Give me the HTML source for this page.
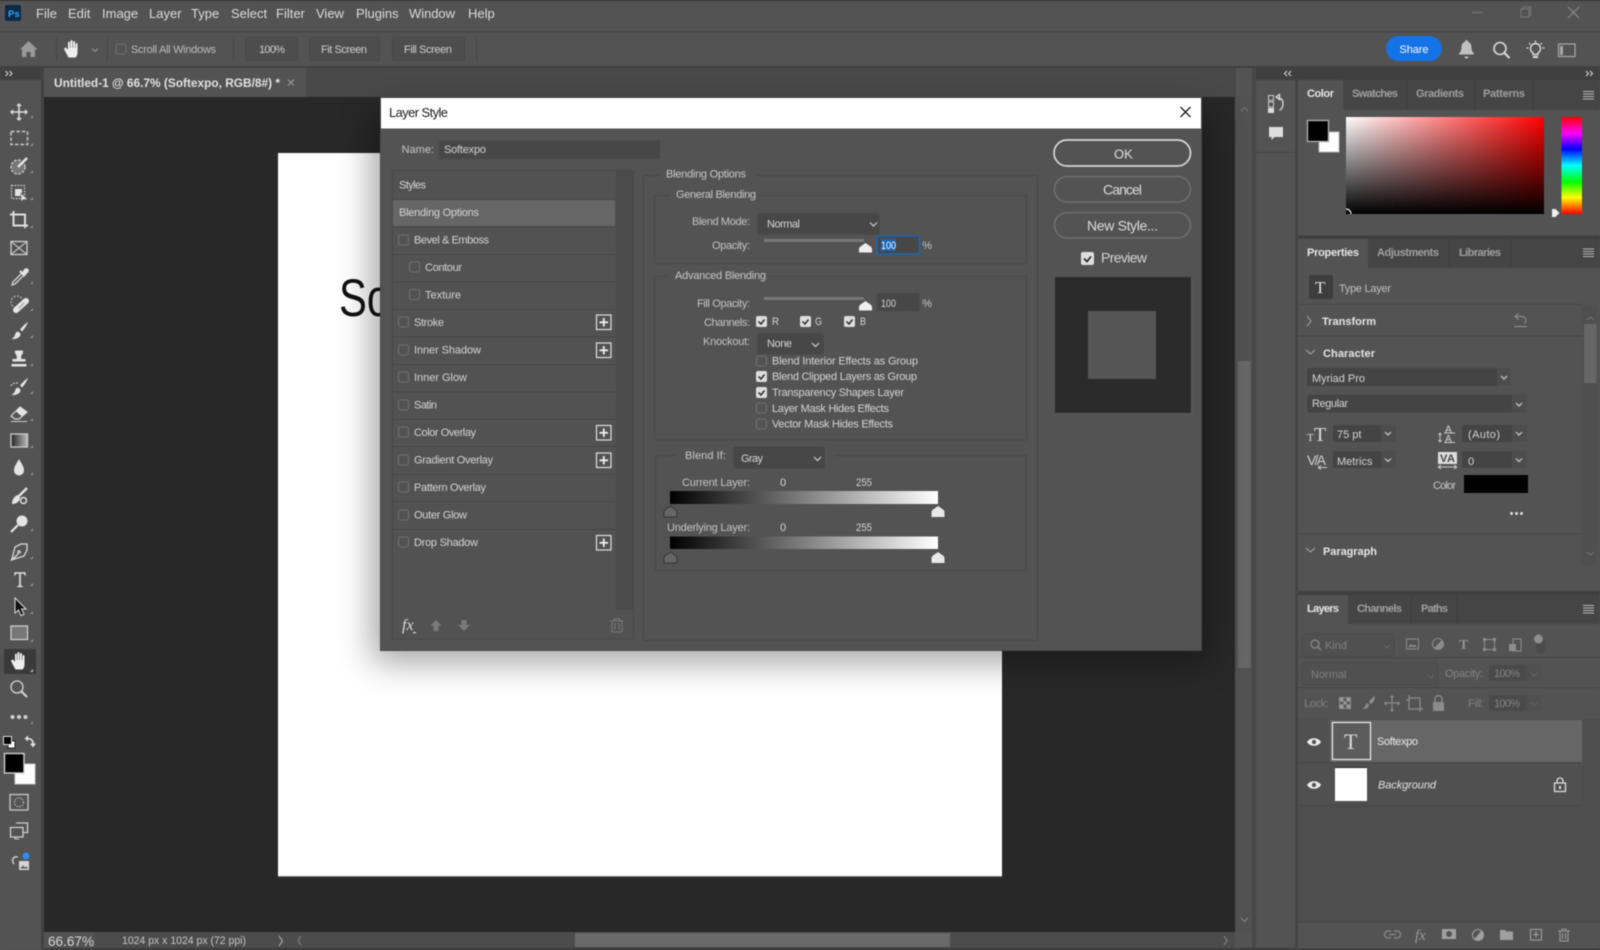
<!DOCTYPE html>
<html lang="en"><head><meta charset="utf-8"><title>Layer Style</title>
<style>
html,body{margin:0;padding:0;width:1600px;height:950px;overflow:hidden;background:#535353}
svg{display:block;position:absolute;left:0;top:0;filter:blur(.4px)}
text{font-family:"Liberation Sans",sans-serif;font-size:11px;fill:#d4d4d4;white-space:pre}
.m{font-size:13px;fill:#dcdcdc}
.o{font-size:11px;fill:#cfcfcf}
.b{font-weight:bold}
.i{fill:#a0a0a0;font-weight:bold}
.a{fill:#e6e6e6;font-weight:bold}
.l{fill:#c4c4c4;text-anchor:end}
.d{fill:#828282}
.s{fill:none;stroke:#d0d0d0;stroke-width:1.3}
.f{fill:#d0d0d0}
.c{fill:none;stroke:#d0d0d0;stroke-width:1.2}
.n{fill:none;stroke:#707070;stroke-width:1.1}
.k{fill:#dedede}
.p{fill:none;stroke:#e0e0e0;stroke-width:1.2}
</style></head><body>
<svg width="1600" height="950" viewBox="0 0 1600 950" xmlns="http://www.w3.org/2000/svg">
<defs>
<linearGradient id="hw" x1="0" x2="1" y1="0" y2="0"><stop offset="0" stop-color="#fff"/><stop offset="1" stop-color="#f00"/></linearGradient>
<linearGradient id="vb" x1="0" x2="0" y1="0" y2="1"><stop offset="0" stop-color="#000" stop-opacity="0"/><stop offset="1" stop-color="#000"/></linearGradient>
<linearGradient id="hue" x1="0" x2="0" y1="0" y2="1"><stop offset="0" stop-color="#f00"/><stop offset=".17" stop-color="#f0f"/><stop offset=".33" stop-color="#00f"/><stop offset=".5" stop-color="#0ff"/><stop offset=".67" stop-color="#0f0"/><stop offset=".83" stop-color="#ff0"/><stop offset="1" stop-color="#f00"/></linearGradient>
<linearGradient id="bw" x1="0" x2="1" y1="0" y2="0"><stop offset="0" stop-color="#000"/><stop offset="1" stop-color="#fff"/></linearGradient>
<linearGradient id="tg" x1="0" x2="1" y1="0" y2="0"><stop offset="0" stop-color="#222"/><stop offset="1" stop-color="#bbb"/></linearGradient>
<filter id="sh" x="-20%" y="-20%" width="140%" height="140%"><feGaussianBlur stdDeviation="17"/></filter>
</defs>

<!-- window chrome -->
<rect width="1600" height="950" fill="#535353"/>
<rect width="1600" height="1" fill="#2f2f2f"/>
<rect y="31" width="1600" height="1.5" fill="#434343"/>
<rect y="66" width="1600" height="2" fill="#414141"/>
<rect x="5" y="5" width="16" height="16" rx="2" fill="#0b2a47"/>
<text x="8" y="17" style="font-size:9.5px;font-weight:bold;fill:#31a8ff">Ps</text>
<text class="m" x="36" y="18">File</text><text class="m" x="68" y="18">Edit</text><text class="m" x="102" y="18">Image</text><text class="m" x="149" y="18">Layer</text><text class="m" x="191" y="18">Type</text><text class="m" x="231" y="18">Select</text><text class="m" x="276" y="18">Filter</text><text class="m" x="316" y="18">View</text><text class="m" x="356" y="18">Plugins</text><text class="m" x="409" y="18" textLength="46">Window</text><text class="m" x="468" y="18">Help</text>
<path d="M1472 12.500h10" stroke="#777" stroke-width="1.2"/>
<path d="M1521 9h8v8h-8zM1523 9V7h7.500v8H1529" fill="none" stroke="#777" stroke-width="1.1"/>
<path d="M1568 7l11 11M1579 7l-11 11" stroke="#8a8a8a" stroke-width="1.2"/>

<!-- options bar -->
<path d="M28.500 41l9 8.500h-2.500V57h-4.500v-5h-4v5h-4.500v-7.500H20z" fill="#9a9a9a"/>
<rect x="56" y="37" width="1" height="24" fill="#464646"/><rect x="107" y="37" width="1" height="24" fill="#464646"/><rect x="233" y="37" width="1" height="24" fill="#464646"/><rect x="476" y="37" width="1" height="24" fill="#464646"/>
<path transform="translate(72.500 49)" d="M-4 8.500L-8 1C-9-1-7-2-6-1L-4.500 1V-6C-4.500-8-2.500-8-2.500-6V-1H-2V-7.500C-2-9.500 0-9.500 0-7.500V-1H.5V-6.500C.5-8.500 2.500-8.500 2.500-6.500V-1H3V-4.500C3-6.500 5-6.500 5-4.500V3C5 6 4 7.500 3 8.500Z" fill="#eee"/>
<path d="M92 48.500l3 3 3-3" fill="none" stroke="#999" stroke-width="1"/>
<rect x="116" y="44" width="10" height="10" rx="2" class="n"/>
<text class="o" x="131" y="53" textLength="85" style="fill:#bdbdbd">Scroll All Windows</text>
<rect x="245.500" y="37.500" width="52" height="23" rx="2" fill="#4d4d4d" stroke="#474747"/><text class="o" x="259" y="53" textLength="26">100%</text>
<rect x="309.500" y="37.500" width="70" height="23" rx="2" fill="#4d4d4d" stroke="#474747"/><text class="o" x="321" y="53" textLength="46">Fit Screen</text>
<rect x="392.500" y="37.500" width="72" height="23" rx="2" fill="#4d4d4d" stroke="#474747"/><text class="o" x="404" y="53" textLength="48">Fill Screen</text>
<rect x="1386" y="36" width="56" height="25" rx="12.500" fill="#1473e6"/><text x="1399.500" y="53" style="fill:#fff" textLength="29">Share</text>
<path d="M1466.500 40c-1 0-1.500.8-1.500 1.700-2.500 1-3.500 3-3.500 5.500 0 3-1 4.800-2.500 6.300v1h15v-1c-1.500-1.500-2.500-3.300-2.500-6.300 0-2.500-1-4.500-3.500-5.500 0-.9-.5-1.700-1.500-1.700zM1464.500 56.500h4a2 2 0 0 1-4 0z" fill="#c0c0c0"/>
<circle cx="1500" cy="48.500" r="6" fill="none" stroke="#dcdcdc" stroke-width="1.6"/><path d="M1504.500 53l5 5" stroke="#dcdcdc" stroke-width="2"/>
<path d="M1533 54.500v-1.500c-1.500-1-2.500-2.500-2.500-4.500a5 5 0 0 1 10 0c0 2-1 3.500-2.500 4.500v1.500z" fill="none" stroke="#dcdcdc" stroke-width="1.400"/><path d="M1533 57h5" stroke="#dcdcdc" stroke-width="2"/><path d="M1526.500 48h2M1542.500 48h2M1529 43l1.500 1.500M1542 43l-1.500 1.500M1535.500 40.500v2" stroke="#dcdcdc" stroke-width="1.200" fill="none"/>
<rect x="1558.500" y="44" width="16.500" height="12.500" fill="none" stroke="#a8a8a8" stroke-width="1.2"/><rect x="1560" y="46" width="3" height="9" fill="#a8a8a8"/>

<!-- left toolbar and doc area -->
<rect y="68" width="41" height="12" fill="#3f3f3f"/><path d="M5.500 71l2.500 2.500-2.500 2.500M9.500 71l2.500 2.500-2.500 2.500" fill="none" stroke="#ddd" stroke-width="1"/>
<rect x="41" y="68" width="3" height="882" fill="#434343"/>
<rect x="44" y="68" width="1192" height="29" fill="#494949"/>
<rect x="44" y="68" width="262" height="29" fill="#535353"/>
<text x="54" y="87" style="font-size:12px;font-weight:bold;fill:#e2e2e2" textLength="226" lengthAdjust="spacingAndGlyphs">Untitled-1 @ 66.7% (Softexpo, RGB/8#) *</text>
<path d="M288 79.500l6 6M294 79.500l-6 6" stroke="#a0a0a0" stroke-width="1"/>
<rect x="44" y="97" width="1191" height="835" fill="#282828"/>

<!-- document -->
<rect x="278" y="153" width="724" height="723" fill="#fff"/>
<rect x="278" y="876" width="724" height="1" fill="#777"/>
<text x="339" y="316" style="font-size:53px;fill:#111" textLength="165" lengthAdjust="spacingAndGlyphs">Softexpo</text>

<!-- vertical scrollbar -->
<rect x="1235" y="97" width="17" height="835" fill="#515151"/>
<rect x="1238" y="361" width="12.500" height="307" fill="#666"/>
<path d="M1241 111l3.500-3.500 3.500 3.500" fill="none" stroke="#777" stroke-width="1"/>
<path d="M1241 918l3.500 3.500 3.500-3.500" fill="none" stroke="#888" stroke-width="1"/>
<rect x="1252" y="68" width="4" height="882" fill="#484848"/>

<!-- status bar -->
<rect x="44" y="932" width="1191" height="18" fill="#4c4c4c"/>
<rect x="44" y="932" width="51" height="18" fill="#535353"/>
<rect x="44" y="948" width="1556" height="2" fill="#3a3a3a"/>
<text x="48" y="946" style="font-size:14px;fill:#d6d6d6" textLength="46" lengthAdjust="spacingAndGlyphs">66.67%</text>
<text x="122" y="944" textLength="124" lengthAdjust="spacingAndGlyphs" style="fill:#c6c6c6">1024 px x 1024 px (72 ppi)</text>
<path d="M279 936l3.500 5-3.500 5" fill="none" stroke="#bbb" stroke-width="1"/>
<path d="M301 936l-3 4.500 3 4.500" fill="none" stroke="#888" stroke-width="1"/>
<rect x="575" y="933" width="375" height="14" fill="#696969"/>
<path d="M1224 936l3 4.500-3 4.500" fill="none" stroke="#888" stroke-width="1"/>

<!-- tools -->
<g class="tools">
<g transform="translate(19 112)"><path d="M0-7V7M-7 0H7" stroke="#ddd" stroke-width="1.6"/><path d="M0-9l3 3h-6zM0 9l3-3h-6zM-9 0l3-3v6zM9 0l-3-3v6z" fill="#ddd"/></g>
<rect x="11" y="131.500" width="16.500" height="13" fill="none" stroke="#ccc" stroke-width="1.500" stroke-dasharray="3.500 2"/>
<g transform="translate(19 166)"><circle cx="-1" cy="1" r="7" fill="#777" stroke="#ccc" stroke-width="1.400" stroke-dasharray="2.500 1.600"/><path d="M-1 1L8-8" stroke="#e4e4e4" stroke-width="2.600"/></g>
<g transform="translate(19 193)"><rect x="-7.500" y="-7.500" width="13" height="13" fill="none" stroke="#ccc" stroke-width="1.200" stroke-dasharray="1.800 1.200"/><rect x="-4" y="-4" width="7" height="7" fill="#e4e4e4"/><path d="M2 0V9l2.500-2.500H9z" fill="#e4e4e4" stroke="#535353" stroke-width=".6"/></g>
<path transform="translate(19 220)" d="M-9-5.500H6V8M-5.500-9V5.500H9" fill="none" stroke="#dedede" stroke-width="2"/>
<g transform="translate(19 248)"><rect x="-8" y="-6.500" width="16" height="13" fill="none" stroke="#d0d0d0" stroke-width="1.300"/><path d="M-8-6.500L8 6.500M8-6.500L-8 6.500" stroke="#d0d0d0" stroke-width="1.100"/></g>
<g transform="translate(19 277)"><path d="M3-4L-6 5-7 8-4 7 5-2" fill="none" stroke="#d8d8d8" stroke-width="1.300"/><path d="M1-6L6-1M4-4L6-7C7.500-9 10-6.500 8-5L5-2" stroke="#e4e4e4" stroke-width="2.200" fill="#e4e4e4"/></g>
<g transform="translate(19 304)"><circle cx="-2" cy="-2" r="6" fill="none" stroke="#bbb" stroke-width="1.100" stroke-dasharray="2 1.500"/><path d="M-3 6L7-3" stroke="#e6e6e6" stroke-width="6" stroke-linecap="round"/><path d="M0 4L5-1" stroke="#777" stroke-width="1.500" stroke-dasharray="1 1"/></g>
<path transform="translate(19 331)" d="M9-9C7-8 3-4 1-1.500L3 .5C5.500-2 8-6 9-9ZM-1 0.500C-4 1-3.500 4-5 6-6 7-7 7.500-7.500 8-3 8.500 2 6.500 1.500 2.500Z" fill="#e4e4e4"/>
<path transform="translate(19 359)" d="M-3-8.500H3C4.500-8.500 4.500-6 3-4.500 2-3 2-1.500 2.500 0H6.500V2.500H-6.500V0H-2.500C-2-1.500-2-3-3-4.500-4.500-6-4.500-8.500-3-8.500ZM-7.500 5H7.500V7.500H-7.500Z" fill="#e4e4e4"/>
<g transform="translate(19 387)"><path d="M9-9C7-8 3-4 1-1.500L3 .5C5.500-2 8-6 9-9ZM-1 0.500C-4 1-3.500 4-5 6-6 7-7 7.500-7.500 8-3 8.500 2 6.500 1.500 2.500Z" fill="#e4e4e4"/><path d="M-8-1C-7-4-4-4-1-4" fill="none" stroke="#ccc" stroke-width="1.200" stroke-dasharray="2 1.200"/></g>
<g transform="translate(19 414)"><path d="M-8 2L1-7 8-2 0 5H-4Z" fill="none" stroke="#d8d8d8" stroke-width="1.200"/><path d="M-3-2.500L1-7 8-2 3 2.500Z" fill="#e4e4e4"/><path d="M-8 7.500H8" stroke="#ccc" stroke-width="1"/></g>
<rect x="11" y="434" width="16.500" height="13" fill="url(#tg)" stroke="#ccc" stroke-width="1.300"/>
<path transform="translate(19 468)" d="M0-9C-2-5-5-2-5 2.500A5 5 0 0 0 5 2.500C5-2 2-5 0-9Z" fill="#e4e4e4"/>
<g transform="translate(19 496)"><path d="M8-8L-1 1" stroke="#e4e4e4" stroke-width="2.400"/><path d="M-1-1C-5 0-7 4-7 8-3 8 1 6 1 1Z" fill="#e4e4e4"/><circle cx="4.500" cy="4.500" r="3" fill="none" stroke="#e4e4e4" stroke-width="1.400"/></g>
<g transform="translate(19 524)"><circle cx="3" cy="-3" r="5.500" fill="#e4e4e4"/><path d="M-1 1L-8 8" stroke="#e4e4e4" stroke-width="2.200"/></g>
<g transform="translate(19 552)" fill="none" stroke="#dcdcdc" stroke-width="1.300"><path d="M8-8L2-8-4-5-7 7-7.500 8-6 7.500 5 4 8-2Z"/><path d="M-7 8L-1 2"/><circle cx="0" cy="0" r="1.200"/></g>
<path transform="translate(20 579.500) scale(.8 .9)" d="M-7-8H7V-4H6C6-6 5-6.500 3-6.500H1V6C1 7 2 7.300 3.500 7.300V8.500H-3.500V7.300C-2 7.300-1 7-1 6V-6.500H-3C-5-6.500-6-6-6-4H-7Z" fill="#e4e4e4"/>
<path transform="translate(19 607)" d="M-4-9V6L-.5 3 2 8.500 5 7.300 2.500 2H7Z" fill="#111" stroke="#ddd" stroke-width="1"/>
<rect x="11" y="626" width="16.500" height="13.500" fill="#777" stroke="#ccc" stroke-width="1.300"/>
<rect x="4" y="649" width="32" height="25" rx="1" fill="#3a3a3a"/>
<path transform="translate(19.500 661)" d="M-4 8.500L-8 1C-9-1-7-2-6-1L-4.500 1V-6C-4.500-8-2.500-8-2.500-6V-1H-2V-7.500C-2-9.500 0-9.500 0-7.500V-1H.5V-6.500C.5-8.500 2.500-8.500 2.500-6.500V-1H3V-4.500C3-6.500 5-6.500 5-4.500V3C5 6 4 7.500 3 8.500Z" fill="#eee"/>
<g transform="translate(19 689)"><circle cx="-2" cy="-2" r="6" fill="none" stroke="#d6d6d6" stroke-width="1.300"/><path d="M2.500 2.500L8 8" stroke="#d6d6d6" stroke-width="2"/></g>
<circle cx="12.500" cy="717" r="2" fill="#d0d0d0"/><circle cx="19" cy="717" r="2" fill="#d0d0d0"/><circle cx="25.500" cy="717" r="2" fill="#d0d0d0"/>
<g fill="#8f8f8f"><path d="M33 118h-3l3-3zM33 146h-3l3-3zM33 173h-3l3-3zM33 200h-3l3-3zM33 228h-3l3-3zM33 284h-3l3-3zM33 311h-3l3-3zM33 338h-3l3-3zM33 366h-3l3-3zM33 394h-3l3-3zM33 421h-3l3-3zM33 448h-3l3-3zM33 475h-3l3-3zM33 531h-3l3-3zM33 559h-3l3-3zM33 586h-3l3-3zM33 614h-3l3-3zM33 642h-3l3-3zM33 724h-3l3-3z"/></g>
<path d="M33 672h-3l3-3z" fill="#bbb"/>
<rect x="8" y="741" width="7" height="7" fill="#fff" stroke="#222"/><rect x="3.500" y="736.500" width="8" height="8" fill="#000" stroke="#ddd"/>
<path d="M27 738.500c4 0 6 1.500 6 5" fill="none" stroke="#e0e0e0" stroke-width="1.600"/><path d="M24.500 738.500l3.500-3v6zM33 747.500l3-4h-6z" fill="#e0e0e0"/>
<rect x="15" y="764" width="20" height="20" fill="#fff" stroke="#ccc"/>
<rect x="4.500" y="753.500" width="19.500" height="19.500" fill="#000" stroke="#cfcfcf" stroke-width="1.400"/>
<rect x="10" y="794.500" width="18" height="15.500" fill="none" stroke="#c8c8c8" stroke-width="1.300"/><circle cx="19" cy="802.300" r="4.500" fill="none" stroke="#c8c8c8" stroke-dasharray="1.500 1.200"/>
<path d="M16 823h11.500v9.500h-4M10.500 827.500h12.500v9.500h-12.500z" fill="none" stroke="#d0d0d0" stroke-width="1.300"/><path d="M15 837v2h4" stroke="#d0d0d0" fill="none"/>
<path d="M14 864C11 860 13 856 18 857" fill="none" stroke="#d6d6d6" stroke-width="1.400"/><rect x="19" y="861" width="10" height="9" fill="#d6d6d6"/><path d="M20 868.500l3-3 2 2 1.500-1 1.500 2z" fill="#555"/><circle cx="26" cy="856" r="3.500" fill="#2d8ceb"/>
</g>

<!-- right icons column -->
<rect x="1256" y="68" width="344" height="12" fill="#3f3f3f"/>
<path d="M1287 71l-2.500 2.500 2.500 2.500M1291 71l-2.500 2.500 2.500 2.500M1586 71l2.500 2.500-2.500 2.500M1590 71l2.500 2.500-2.500 2.500" fill="none" stroke="#ddd" stroke-width="1"/>
<rect x="1256" y="152" width="39" height="1" fill="#444"/>
<rect x="1295" y="80" width="3" height="870" fill="#444"/>
<rect x="1268.500" y="95.500" width="5" height="5" fill="none" stroke="#ccc"/><rect x="1268.500" y="102" width="5" height="5" fill="none" stroke="#ccc"/><rect x="1268" y="108" width="6" height="5" fill="#ddd"/>
<path d="M1278 98c4 0 5 3 5 6 0 3-1.500 5-3.500 6.500M1276 97l3.500-2.500v5z" fill="none" stroke="#ddd" stroke-width="1.300"/>
<path d="M1269 127h14v10h-8.500l-3 3v-3h-2.500z" fill="#ddd"/>

<!-- color panel -->
<rect x="1298" y="80" width="302" height="30" fill="#454545"/>
<rect x="1298" y="80" width="45" height="30" fill="#535353"/>
<rect x="1406" y="80" width="1" height="30" fill="#3c3c3c"/><rect x="1474" y="80" width="1" height="30" fill="#3c3c3c"/><rect x="1533" y="80" width="1" height="30" fill="#3c3c3c"/>
<text class="a" x="1307" y="97" textLength="27">Color</text><text class="i" x="1352" y="97" textLength="46">Swatches</text><text class="i" x="1416" y="97" textLength="48">Gradients</text><text class="i" x="1483" y="97" textLength="42">Patterns</text>
<path d="M1583 91.500h11M1583 94h11M1583 96.500h11M1583 99h11" stroke="#b8b8b8" stroke-width="1"/>
<rect x="1319" y="132" width="20" height="20" fill="#fff" stroke="#bbb"/>
<rect x="1307.500" y="120.500" width="21" height="21" fill="#000" stroke="#aaa" stroke-width="1.400"/>
<rect x="1346" y="117" width="198" height="97" fill="url(#hw)"/><rect x="1346" y="117" width="198" height="97" fill="url(#vb)"/>
<path d="M1346 209a5 5 0 0 1 5 5" fill="none" stroke="#eee" stroke-width="1.200"/>
<rect x="1561.500" y="117" width="20.500" height="97" fill="url(#hue)"/>
<path d="M1552 209h3.500l4 4-4 4H1552z" fill="#eee"/>
<rect x="1298" y="235.500" width="302" height="3.500" fill="#3f3f3f"/>

<!-- properties -->
<rect x="1298" y="239" width="302" height="29" fill="#454545"/>
<rect x="1298" y="239" width="70" height="29" fill="#535353"/>
<rect x="1449" y="239" width="1" height="29" fill="#3c3c3c"/><rect x="1510" y="239" width="1" height="29" fill="#3c3c3c"/>
<text class="a" x="1307" y="256" textLength="52">Properties</text><text class="i" x="1377" y="256" textLength="62">Adjustments</text><text class="i" x="1459" y="256" textLength="42">Libraries</text>
<path d="M1583 249h11M1583 251.500h11M1583 254h11M1583 256.500h11" stroke="#b8b8b8" stroke-width="1"/>
<rect x="1309" y="275" width="24" height="24" rx="2" fill="#3d3d3d"/>
<text x="1315" y="293" style="font-family:'Liberation Serif',serif;font-size:17px;fill:#e4e4e4">T</text>
<text x="1339" y="292" textLength="52" style="fill:#c0c0c0">Type Layer</text>
<rect x="1298" y="304" width="284" height="1" fill="#454545"/>
<path d="M1307 316l4 5-4 5" fill="none" stroke="#aaa" stroke-width="1"/>
<text class="a" x="1322" y="325" textLength="54">Transform</text>
<path d="M1518.500 313.500l-3.500 3 3.500 3M1515 316.500h6.500a4 4 0 0 1 3 7M1514 326.500h13" fill="none" stroke="#8a8a8a" stroke-width="1.200"/>
<rect x="1298" y="335.500" width="284" height="1" fill="#454545"/>
<path d="M1306 350l4.500 4 4.500-4" fill="none" stroke="#aaa" stroke-width="1"/>
<text class="a" x="1323" y="357" textLength="52">Character</text>
<rect x="1307" y="368" width="204" height="18" rx="2" fill="#444"/><rect x="1497" y="368" width="14" height="18" fill="#4d4d4d"/><path d="M1501 376l3 3 3-3" class="c"/>
<text x="1312" y="382" textLength="53">Myriad Pro</text>
<rect x="1307" y="394.500" width="220" height="18" rx="2" fill="#444"/><rect x="1512" y="394.500" width="15" height="18" fill="#4d4d4d"/><path d="M1516 403l3 3 3-3" class="c"/>
<text x="1312" y="407" textLength="36">Regular</text>
<text x="1307" y="441" style="font-family:'Liberation Serif',serif;font-size:11px;fill:#ddd">T</text><text x="1314" y="441" style="font-family:'Liberation Serif',serif;font-size:20px;fill:#ddd">T</text>
<rect x="1333" y="425" width="63" height="17" rx="2" fill="#444"/><rect x="1381" y="425" width="15" height="17" fill="#4d4d4d"/><path d="M1385 432l3 3 3-3" class="c"/>
<text x="1337" y="438">75 pt</text>
<text x="1307" y="465" style="font-size:14px;fill:#d0d0d0" textLength="19">V/A</text><path d="M1318 467.500h9M1318 467.500l3-2m-3 2l3 2" stroke="#ccc" fill="none"/>
<rect x="1333" y="451" width="63" height="17" rx="2" fill="#444"/><rect x="1381" y="451" width="15" height="17" fill="#4d4d4d"/><path d="M1385 458.500l3 3 3-3" class="c"/>
<text x="1337" y="465">Metrics</text>
<text x="1445" y="432.500" style="font-size:10px;fill:#d6d6d6">A</text><text x="1445" y="442" style="font-size:10px;fill:#d6d6d6">A</text><path d="M1440 433v9M1438.500 435l1.500-2 1.500 2M1438.500 440l1.500 2 1.500-2M1444 433h11M1444 442.500h11" stroke="#ccc" fill="none" stroke-width=".9"/>
<rect x="1462" y="425" width="65" height="17" rx="2" fill="#444"/><rect x="1512" y="425" width="15" height="17" fill="#4d4d4d"/><path d="M1516 432l3 3 3-3" class="c"/>
<text x="1468" y="438" textLength="32">(Auto)</text>
<rect x="1438" y="452" width="19" height="12" fill="#ddd"/><text x="1440" y="462" style="font-size:11px;font-weight:bold;fill:#444" textLength="15">VA</text><path d="M1438 467h19M1438 467l3-2m-3 2l3 2M1457 467l-3-2m3 2l-3 2" stroke="#ccc" fill="none"/>
<rect x="1462" y="451" width="65" height="17" rx="2" fill="#444"/><rect x="1512" y="451" width="15" height="17" fill="#4d4d4d"/><path d="M1516 458.500l3 3 3-3" class="c"/>
<text x="1468" y="465">0</text>
<text x="1433" y="489" textLength="23" style="fill:#c4c4c4">Color</text>
<rect x="1464" y="475" width="64" height="18" fill="#000"/>
<circle cx="1511.500" cy="513.500" r="1.500" fill="#ddd"/><circle cx="1516.500" cy="513.500" r="1.500" fill="#ddd"/><circle cx="1521.500" cy="513.500" r="1.500" fill="#ddd"/>
<rect x="1298" y="533.500" width="284" height="1" fill="#454545"/>
<path d="M1306 548l4.500 4 4.500-4" fill="none" stroke="#aaa" stroke-width="1"/>
<text class="a" x="1323" y="555" textLength="54">Paragraph</text>
<rect x="1582" y="305" width="15" height="260" fill="#4f4f4f"/><rect x="1584" y="324" width="12.500" height="59" fill="#666"/>
<path d="M1587 320l3.500-3 3.500 3M1587 552l3.500 3 3.500-3" fill="none" stroke="#777" stroke-width="1"/>
<rect x="1298" y="591" width="302" height="4" fill="#3f3f3f"/>

<!-- layers -->
<rect x="1298" y="595" width="302" height="29" fill="#454545"/>
<rect x="1298" y="595" width="50" height="29" fill="#535353"/>
<rect x="1411" y="595" width="1" height="29" fill="#3c3c3c"/><rect x="1457" y="595" width="1" height="29" fill="#3c3c3c"/>
<text class="a" x="1307" y="612" textLength="32">Layers</text><text class="i" x="1357" y="612" textLength="45">Channels</text><text class="i" x="1421" y="612" textLength="27">Paths</text>
<path d="M1583 605.500h11M1583 608h11M1583 610.500h11M1583 613h11" stroke="#b8b8b8" stroke-width="1"/>
<rect x="1302" y="634" width="92" height="22" rx="2" fill="#505050" stroke="#4a4a4a"/>
<circle cx="1315" cy="644" r="4" fill="none" stroke="#8c8c8c" stroke-width="1.200"/><path d="M1318 647l3 3" stroke="#8c8c8c" stroke-width="1.300"/>
<text class="d" x="1325" y="649">Kind</text><path d="M1384 645l3 3 3-3" fill="none" stroke="#666"/>
<rect x="1406.500" y="639" width="12" height="10" fill="none" stroke="#8c8c8c"/><path d="M1408 647l3-3 2 2 1.500-1.500 2.500 2.500z" fill="#8c8c8c"/>
<circle cx="1438" cy="644" r="5.500" fill="none" stroke="#8c8c8c"/><path d="M1442 640a5.500 5.500 0 0 1-8 8z" fill="#8c8c8c"/>
<text x="1459" y="649" style="font-family:'Liberation Serif',serif;font-size:14px;font-weight:bold;fill:#929292">T</text>
<rect x="1484.500" y="639.500" width="10" height="10" fill="none" stroke="#8c8c8c" stroke-width="1.100"/><rect x="1483" y="638" width="3" height="3" fill="#8c8c8c"/><rect x="1493" y="638" width="3" height="3" fill="#8c8c8c"/><rect x="1483" y="648" width="3" height="3" fill="#8c8c8c"/><rect x="1493" y="648" width="3" height="3" fill="#8c8c8c"/>
<path d="M1513 639h8v12h-8z" fill="none" stroke="#8c8c8c"/><rect x="1509" y="644" width="7" height="7" fill="#8c8c8c"/>
<rect x="1536" y="636" width="9" height="18" rx="4.500" fill="#4b4b4b"/><circle cx="1538.500" cy="639" r="4.500" fill="#8e8e8e"/>
<rect x="1298" y="657" width="302" height="1" fill="#464646"/>
<rect x="1302" y="663" width="136" height="22" rx="2" fill="#505050" stroke="#4a4a4a"/>
<text class="d" x="1311" y="678">Normal</text><path d="M1428 675l3 3 3-3" fill="none" stroke="#666"/>
<text class="d" x="1445" y="677" textLength="38">Opacity:</text>
<rect x="1489" y="665" width="53" height="16" rx="1" fill="#4a4a4a"/><rect x="1526" y="665" width="16" height="16" fill="#505050"/>
<text class="d" x="1494" y="677" textLength="26">100%</text><path d="M1531 673l3 3 3-3" fill="none" stroke="#666"/>
<rect x="1298" y="687" width="302" height="1" fill="#464646"/>
<text class="d" x="1304" y="707" textLength="25">Lock:</text>
<rect x="1339.500" y="697.500" width="11" height="11" fill="#5c5c5c" stroke="#8c8c8c"/><path d="M1340 698h3.500v3.500h-3.500zM1346.500 698h3.500v3.500h-3.500zM1343.500 701.500h3v3h-3zM1340 704.500h3.500v3.500h-3.500zM1346.500 704.500h3.500v3.500h-3.500z" fill="#9a9a9a"/>
<path d="M1375 696c-2 1-5 4-6 6l2 2c2-1 4-5 4-8zM1367.500 703c-2 .5-1.500 3-3 4l-2 1.500c3 1 6 0 6.500-3.500z" fill="#8c8c8c"/>
<path d="M1392 696v15M1384.500 703h15" stroke="#8c8c8c" stroke-width="1.200"/><path d="M1392 695l2.500 2.500h-5zM1392 712l2.500-2.500h-5zM1384 703.500l2.500-2.500v5zM1400 703.500l-2.500-2.500v5z" fill="#8c8c8c"/>
<path d="M1409 698h11v11h-11zM1406 700h3M1420 712v-3M1409 695v3M1420 709h3" fill="none" stroke="#8c8c8c" stroke-width="1.200"/>
<rect x="1433" y="702" width="11" height="9" fill="#8c8c8c"/><path d="M1435 702v-3a3.500 3.500 0 0 1 7 0v3" fill="none" stroke="#8c8c8c" stroke-width="1.300"/>
<text class="d" x="1468" y="707" textLength="16">Fill:</text>
<rect x="1489" y="695" width="53" height="16" rx="1" fill="#4a4a4a"/><rect x="1526" y="695" width="16" height="16" fill="#505050"/>
<text class="d" x="1494" y="707" textLength="26">100%</text><path d="M1531 703l3 3 3-3" fill="none" stroke="#666"/>
<rect x="1298" y="719" width="284" height="203" fill="#4e4e4e"/>
<rect x="1582" y="719" width="18" height="203" fill="#4e4e4e"/>
<rect x="1298" y="720" width="32" height="42" fill="#505050"/>
<rect x="1330" y="720" width="252" height="42" fill="#666"/>
<rect x="1298" y="763" width="284" height="42" fill="#505050"/>
<rect x="1298" y="762" width="284" height="1.200" fill="#484848"/><rect x="1298" y="805" width="284" height="1" fill="#484848"/>
<rect x="1332.500" y="722.500" width="38" height="37" fill="#5c5c5c" stroke="#eee" stroke-width="1.200"/>
<text x="1344" y="749" style="font-family:'Liberation Serif',serif;font-size:22px;fill:#dcdcdc">T</text>
<rect x="1335" y="768" width="32" height="33" fill="#fff"/><rect x="1335" y="767" width="32" height="1" fill="#222"/>
<path d="M1307 742c3-5 11-5 14 0-3 5-11 5-14 0z" fill="#eee"/><circle cx="1314" cy="742" r="2.200" fill="#555"/>
<path d="M1307 785c3-5 11-5 14 0-3 5-11 5-14 0z" fill="#eee"/><circle cx="1314" cy="785" r="2.200" fill="#555"/>
<text x="1377" y="745" textLength="41" style="fill:#ececec">Softexpo</text>
<text x="1378" y="788.500" textLength="58" style="font-style:italic;fill:#e4e4e4">Background</text>
<rect x="1554.500" y="783" width="11" height="8.500" fill="none" stroke="#ddd" stroke-width="1.300"/><path d="M1557 783v-2a3 3 0 0 1 6 0v2" fill="none" stroke="#ddd" stroke-width="1.300"/><rect x="1559" y="786" width="2" height="3" fill="#ddd"/>
<rect x="1298" y="921.500" width="302" height="1" fill="#454545"/><rect x="1298" y="922.500" width="302" height="26" fill="#535353"/>
<path d="M1391 931h-3a3.500 3.500 0 0 0 0 7h3M1394 931h3a3.500 3.500 0 0 1 0 7h-3M1389 934.500h7" fill="none" stroke="#8a8a8a" stroke-width="1.300"/>
<text x="1415" y="940" style="font-family:'Liberation Serif',serif;font-style:italic;font-size:15px;fill:#9a9a9a">fx</text>
<rect x="1442" y="929" width="14" height="10" fill="#a0a0a0"/><circle cx="1449" cy="934" r="3" fill="#535353"/>
<circle cx="1478" cy="935" r="5.500" fill="none" stroke="#a0a0a0"/><path d="M1481.500 930.500a5.500 5.500 0 0 1-7 8.500z" fill="#a0a0a0"/>
<path d="M1500 930h5l1.500 1.500h6.500v8.500h-13z" fill="#a0a0a0"/>
<rect x="1530.500" y="929.500" width="11" height="10.500" fill="none" stroke="#a0a0a0" stroke-width="1.100"/><path d="M1533 934.500h6M1536 931.500v6" stroke="#a0a0a0" stroke-width="1.100"/>
<path d="M1560 931h8v10h-8zM1558 931h12M1562 931v-2h4v2M1562.500 933v6M1565.500 933v6" fill="none" stroke="#9a9a9a" stroke-width="1.100"/>

<!-- dialog shadow -->
<rect x="372" y="112" width="838" height="550" fill="#000" opacity=".36" filter="url(#sh)"/>

<!-- dialog -->
<rect x="380" y="97" width="822" height="554" fill="#535353"/>
<rect x="380.500" y="97.500" width="821" height="553" fill="none" stroke="#4a4a4a"/>
<rect x="381" y="98" width="820" height="30.500" fill="#fff"/>
<text x="389" y="117" style="font-size:13px;fill:#1c1c1c" textLength="59">Layer Style</text>
<path d="M1180.500 107l10 10M1190.500 107l-10 10" stroke="#1a1a1a" stroke-width="1.300"/>

<text class="l" x="434" y="153" style="fill:#c8c8c8">Name:</text>
<rect x="439" y="140.500" width="221" height="18.500" rx="1" fill="#474747" stroke="#4d4d4d"/>
<text x="444" y="153" textLength="42" style="fill:#d4d4d4">Softexpo</text>

<!-- style list -->
<rect x="392.500" y="170.500" width="241" height="468.500" fill="#525252" stroke="#474747"/>
<rect x="616" y="171" width="17" height="439" fill="#4b4b4b"/>
<rect x="393" y="173" width="223" height="25.500" fill="#525252"/>
<rect x="393" y="200" width="222" height="26" fill="#666"/>
<g fill="#464646"><rect x="393" y="199" width="223" height="1"/><rect x="393" y="226.500" width="223" height="1"/><rect x="393" y="254" width="223" height="1"/><rect x="393" y="281.500" width="223" height="1"/><rect x="393" y="309" width="223" height="1"/><rect x="393" y="336.500" width="223" height="1"/><rect x="393" y="364" width="223" height="1"/><rect x="393" y="391.500" width="223" height="1"/><rect x="393" y="419" width="223" height="1"/><rect x="393" y="446" width="223" height="1"/><rect x="393" y="474" width="223" height="1"/><rect x="393" y="501" width="223" height="1"/><rect x="393" y="529" width="223" height="1"/></g>
<text x="399" y="188.500" textLength="27">Styles</text>
<text x="399" y="216" textLength="80">Blending Options</text>
<g>
<rect x="398.500" y="235" width="10" height="10" rx="2" class="n"/><text x="414" y="243.500" textLength="75">Bevel &amp; Emboss</text>
<rect x="409.500" y="262" width="10" height="10" rx="2" class="n"/><text x="425" y="271" textLength="37">Contour</text>
<rect x="409.500" y="289.500" width="10" height="10" rx="2" class="n"/><text x="425" y="298.500" textLength="36">Texture</text>
<rect x="398.500" y="317" width="10" height="10" rx="2" class="n"/><text x="414" y="326" textLength="30">Stroke</text>
<rect x="398.500" y="345" width="10" height="10" rx="2" class="n"/><text x="414" y="353.500" textLength="67">Inner Shadow</text>
<rect x="398.500" y="372" width="10" height="10" rx="2" class="n"/><text x="414" y="381" textLength="53">Inner Glow</text>
<rect x="398.500" y="400" width="10" height="10" rx="2" class="n"/><text x="414" y="408.500" textLength="23">Satin</text>
<rect x="398.500" y="427" width="10" height="10" rx="2" class="n"/><text x="414" y="436" textLength="62">Color Overlay</text>
<rect x="398.500" y="455" width="10" height="10" rx="2" class="n"/><text x="414" y="463.500" textLength="79">Gradient Overlay</text>
<rect x="398.500" y="482" width="10" height="10" rx="2" class="n"/><text x="414" y="491" textLength="72">Pattern Overlay</text>
<rect x="398.500" y="510" width="10" height="10" rx="2" class="n"/><text x="414" y="518.500" textLength="53">Outer Glow</text>
<rect x="398.500" y="537" width="10" height="10" rx="2" class="n"/><text x="414" y="546" textLength="64">Drop Shadow</text>
</g>
<g class="pb"><rect x="596.500" y="315" width="14.500" height="14.500" class="p"/><path d="M599.500 322.300h8.500M603.800 318v8.500" stroke="#eee" stroke-width="1.800"/>
<rect x="596.500" y="343" width="14.500" height="14.500" class="p"/><path d="M599.500 350.300h8.500M603.800 346v8.500" stroke="#eee" stroke-width="1.800"/>
<rect x="596.500" y="425.500" width="14.500" height="14.500" class="p"/><path d="M599.500 432.800h8.500M603.800 428.500v8.500" stroke="#eee" stroke-width="1.800"/>
<rect x="596.500" y="453" width="14.500" height="14.500" class="p"/><path d="M599.500 460.300h8.500M603.800 456v8.500" stroke="#eee" stroke-width="1.800"/>
<rect x="596.500" y="535.500" width="14.500" height="14.500" class="p"/><path d="M599.500 542.800h8.500M603.800 538.500v8.500" stroke="#eee" stroke-width="1.800"/></g>
<text x="402" y="630" style="font-family:'Liberation Serif',serif;font-style:italic;font-size:16px;fill:#ddd">fx</text><rect x="413" y="632" width="3" height="1.200" fill="#ddd"/>
<path d="M436 620l6 6h-3.500v5h-5v-5H430z" fill="#7a7a7a"/><path d="M464 631l6-6h-3.500v-5h-5v5H458z" fill="#7a7a7a"/>
<path d="M612 621h10v11h-10zM610.500 621h13M614 621v-2h6v2M615 623v7M619 623v7" fill="none" stroke="#777" stroke-width="1.100"/>

<!-- blending options -->
<rect x="643.500" y="175.500" width="394" height="465" fill="none" stroke="#484848"/>
<rect x="660" y="168" width="96" height="14" fill="#535353"/>
<text x="666" y="177.500" textLength="80" style="fill:#c8c8c8">Blending Options</text>
<rect x="654.500" y="195.500" width="372" height="68" fill="none" stroke="#484848"/>
<rect x="670" y="188" width="88" height="14" fill="#535353"/>
<text x="676" y="198" textLength="80" style="fill:#c8c8c8">General Blending</text>
<text class="l" x="750" y="225" textLength="58">Blend Mode:</text>
<rect x="757.500" y="213.500" width="122" height="21" rx="2" fill="#474747" stroke="#4d4d4d"/><text x="767" y="227.500" textLength="33">Normal</text><path d="M870 222.500l3.500 3.500 3.500-3.500" class="c"/>
<text class="l" x="750" y="249" textLength="38">Opacity:</text>
<rect x="764" y="239" width="100" height="3" fill="#777"/>
<path d="M865.500 243l5 3.500q1.500 1 1.500 3v3h-13v-3q0-2 1.500-3z" fill="#eee"/>
<rect x="877" y="236" width="42.500" height="18" fill="#474747" stroke="#1a65b5" stroke-width="1.500"/>
<rect x="881" y="239" width="15" height="12" fill="#1a65b5"/><text x="881" y="249" textLength="15" lengthAdjust="spacingAndGlyphs" style="fill:#fff">100</text>
<text class="l" x="932" y="249" style="font-size:11px">%</text>
<rect x="654.500" y="276.500" width="372" height="163.500" fill="none" stroke="#484848"/>
<rect x="668" y="269" width="100" height="14" fill="#535353"/>
<text x="675" y="279" textLength="91" style="fill:#c8c8c8">Advanced Blending</text>
<text class="l" x="750" y="307" textLength="53">Fill Opacity:</text>
<rect x="764" y="297" width="100" height="3" fill="#777"/>
<path d="M865.500 301l5 3.500q1.500 1 1.500 3v3h-13v-3q0-2 1.500-3z" fill="#eee"/>
<rect x="877" y="293" width="42.500" height="18" fill="#474747" stroke="#4d4d4d"/><text x="881" y="307" textLength="15" lengthAdjust="spacingAndGlyphs">100</text>
<text class="l" x="932" y="307" style="font-size:11px">%</text>
<text class="l" x="750" y="326" textLength="46">Channels:</text>
<rect x="756" y="316" width="11" height="11" rx="2" class="k"/><path d="M758.500 321.500l2.500 2.500 3.500-4.500" fill="none" stroke="#2b2b2b" stroke-width="1.500"/><text x="772" y="325" textLength="7" lengthAdjust="spacingAndGlyphs">R</text>
<rect x="800" y="316" width="11" height="11" rx="2" class="k"/><path d="M802.500 321.500l2.500 2.500 3.500-4.500" fill="none" stroke="#2b2b2b" stroke-width="1.500"/><text x="815" y="325" textLength="7" lengthAdjust="spacingAndGlyphs">G</text>
<rect x="844" y="316" width="11" height="11" rx="2" class="k"/><path d="M846.500 321.500l2.500 2.500 3.500-4.500" fill="none" stroke="#2b2b2b" stroke-width="1.500"/><text x="860" y="325" textLength="6" lengthAdjust="spacingAndGlyphs">B</text>
<text class="l" x="750" y="345" textLength="47">Knockout:</text>
<rect x="757.500" y="333.500" width="66" height="21" rx="2" fill="#474747" stroke="#4d4d4d"/><text x="767" y="347" textLength="25">None</text><path d="M812 343l3.500 3.500 3.500-3.500" class="c"/>
<rect x="756.500" y="356" width="10" height="10" rx="2" class="n"/><text x="772" y="364.500" textLength="146">Blend Interior Effects as Group</text>
<rect x="756" y="371" width="11" height="11" rx="2" class="k"/><path d="M758.500 376.500l2.500 2.500 3.500-4.500" fill="none" stroke="#2b2b2b" stroke-width="1.500"/><text x="772" y="380" textLength="145">Blend Clipped Layers as Group</text>
<rect x="756" y="387" width="11" height="11" rx="2" class="k"/><path d="M758.500 392.500l2.500 2.500 3.500-4.500" fill="none" stroke="#2b2b2b" stroke-width="1.500"/><text x="772" y="396" textLength="132">Transparency Shapes Layer</text>
<rect x="756.500" y="403" width="10" height="10" rx="2" class="n"/><text x="772" y="412" textLength="117">Layer Mask Hides Effects</text>
<rect x="756.500" y="419" width="10" height="10" rx="2" class="n"/><text x="772" y="427.500" textLength="121">Vector Mask Hides Effects</text>

<rect x="655.500" y="455.500" width="370.500" height="115" fill="none" stroke="#484848"/>
<rect x="676" y="448" width="158" height="14" fill="#535353"/>
<text x="685" y="459" textLength="41" style="fill:#c8c8c8">Blend If:</text>
<rect x="733.500" y="446.500" width="91" height="22" rx="2" fill="#474747" stroke="#4d4d4d"/><text x="741" y="462" textLength="22">Gray</text><path d="M814 457l3.500 3.500 3.500-3.500" class="c"/>
<text class="l" x="750" y="486" textLength="68">Current Layer:</text><text x="780" y="486">0</text><text x="856" y="486" textLength="16" lengthAdjust="spacingAndGlyphs">255</text>
<rect x="670" y="491" width="268" height="13" fill="url(#bw)"/>
<path d="M670.500 506l5 3.500q1.500 1 1.500 3v4.500h-13v-4.500q0-2 1.500-3z" fill="#666" stroke="#333"/><path d="M938 506l5 3.500q1.500 1 1.500 3v4.500h-13v-4.500q0-2 1.500-3z" fill="#e8e8e8"/>
<text class="l" x="750" y="531" textLength="83">Underlying Layer:</text><text x="780" y="531">0</text><text x="856" y="531" textLength="16" lengthAdjust="spacingAndGlyphs">255</text>
<rect x="670" y="536.500" width="268" height="12.500" fill="url(#bw)"/>
<path d="M670.500 552l5 3.500q1.500 1 1.500 3v4.500h-13v-4.500q0-2 1.500-3z" fill="#666" stroke="#333"/><path d="M938 552l5 3.500q1.500 1 1.500 3v4.500h-13v-4.500q0-2 1.500-3z" fill="#e8e8e8"/>

<!-- buttons -->
<rect x="1054" y="140" width="136.500" height="26" rx="13" fill="#535353" stroke="#d8d8d8" stroke-width="1.700"/>
<text x="1114" y="158.500" style="font-size:13px;fill:#e0e0e0">OK</text>
<rect x="1054.500" y="176.500" width="136" height="25.500" rx="12.700" fill="none" stroke="#757575" stroke-width="1.300"/>
<text x="1103" y="194.500" style="font-size:14px;fill:#dcdcdc" textLength="39">Cancel</text>
<rect x="1054.500" y="212.500" width="136" height="25.500" rx="12.700" fill="none" stroke="#757575" stroke-width="1.300"/>
<text x="1087" y="230.500" style="font-size:14px;fill:#dcdcdc" textLength="71">New Style...</text>
<rect x="1081" y="252" width="13" height="13" rx="2" class="k"/><path d="M1084 258.500l3 3 4-5" fill="none" stroke="#222" stroke-width="1.700"/>
<text x="1101" y="262.500" style="font-size:14px;fill:#d4d4d4" textLength="46">Preview</text>
<rect x="1055" y="277" width="137" height="137" fill="#5e5e5e"/>
<rect x="1055" y="277" width="136" height="136" fill="#2b2b2b"/>
<rect x="1088" y="311" width="68" height="68" fill="#555"/>
</svg>
</body></html>
